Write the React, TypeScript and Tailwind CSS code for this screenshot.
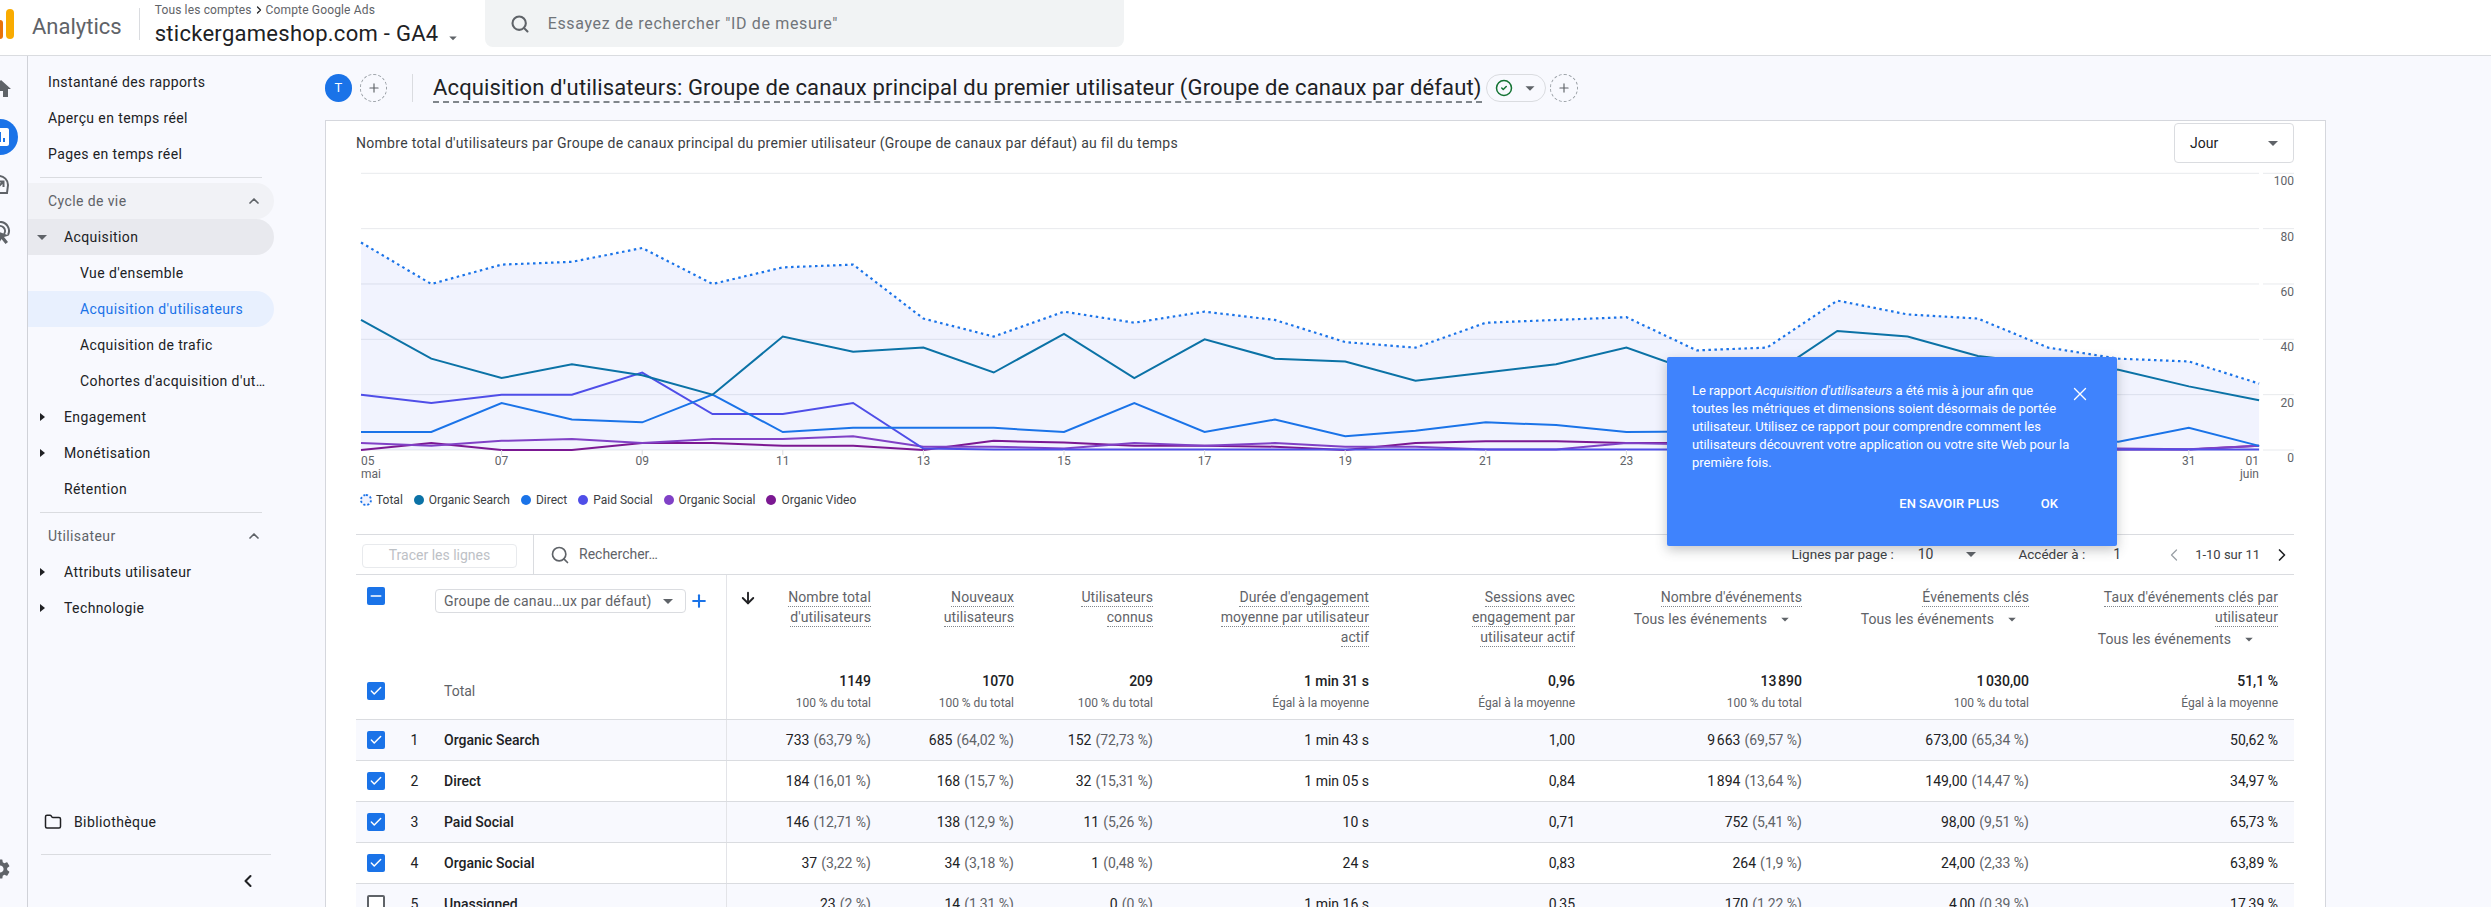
import { Check, ChevronLeft, ChevronRight, ChevronUp, CircleCheck, Folder, Minus, Plus, Search, X, ArrowDown } from "lucide-react";
import { MdAssessment, MdHome, MdSettings } from "react-icons/md";

const Caret = ({ down = true }: { down?: boolean }) => (
  <span
    className={
      down
        ? "inline-block w-0 h-0 border-x-[5px] border-t-[5px] border-x-transparent border-t-[#5f6368]"
        : "inline-block w-0 h-0 border-y-[4px] border-l-[5px] border-y-transparent border-l-[#202124]"
    }
  />
);

const Checkbox = ({ state }: { state: "on" | "off" | "some" }) => {
  if (state === "off") {
    return <span className="block w-[18px] h-[18px] shrink-0 rounded-[2px] border-2 border-[#5f6368] bg-white" />;
  }
  return (
    <span className="flex items-center justify-center w-[18px] h-[18px] shrink-0 rounded-[2px] bg-[#1a73e8] text-white">
      {state === "on" ? <Check size={14} strokeWidth={2.5} /> : <Minus size={16} strokeWidth={2.5} />}
    </span>
  );
};

const NavRow = ({ label, indent, caret, className = "" }: { label: string; indent: "top" | "group" | "child"; caret?: "open" | "closed"; className?: string }) => (
  <div className={`flex items-center h-[36px] w-[246px] rounded-r-[18px] whitespace-nowrap ${className}`}>
    {indent === "top" && <span className="pl-[20px]">{label}</span>}
    {indent === "group" && (
      <>
        <span className="flex justify-center w-[36px] pr-[8px]">{caret === "open" ? <Caret /> : caret === "closed" ? <Caret down={false} /> : null}</span>
        <span>{label}</span>
      </>
    )}
    {indent === "child" && <span className="pl-[52px]">{label}</span>}
  </div>
);

const days = (values: number[]) => values.map((v, i) => `${361 + 70.3 * i},${451 - 2.767 * v}`).join(" ");

const total = [75, 60, 67, 68, 73, 60, 66, 67, 47.5, 41, 50, 46, 50, 47, 39, 37, 46, 47, 48, 36, 37, 54, 49, 47.5, 37, 33, 32, 24];
const series = [
  { name: "Organic Search", color: "#0b72a6", values: [47, 33, 26, 31, 27, 20, 41, 35.5, 37, 28, 42, 26, 40, 33, 32, 25, 28, 31, 37, 28, 26, 43, 41, 34, 31, 29, 23, 18] },
  { name: "Direct", color: "#1a73e8", values: [6.5, 6.5, 17, 11, 10, 20, 6.5, 8, 8, 8, 6.5, 17, 6.5, 11, 5, 7, 10, 9, 6.5, 6.7, 7, 6, 5, 4, 4, 3, 8, 1.5] },
  { name: "Paid Social", color: "#4f4ee8", values: [20, 17, 20, 20, 28, 13, 13, 17, 0.5, 0.2, 0.2, 0.2, 0.2, 0.2, 0.2, 0.2, 0.2, 0.2, 0.2, 0.2, 0.2, 0.2, 0.2, 0.2, 0.2, 0.2, 0.2, 0.2] },
  { name: "Organic Social", color: "#8041c6", values: [2.5, 1.5, 3.3, 4, 2.5, 4, 4, 5, 1.2, 1.2, 0.5, 2.5, 1.5, 2.5, 1.2, 1.2, 0.2, 0.2, 2.5, 2, 1, 1, 1, 1, 1, 0.5, 0.3, 1.5] },
  { name: "Organic Video", color: "#7b1892", values: [0, 2.5, 0, 0, 2.5, 2.5, 1.5, 1.5, 0, 3.3, 2.7, 1.5, 1.5, 1.2, 0, 2.5, 3.2, 3.2, 2.5, 2.5, 2, 2, 1.5, 1, 1, 0.2, 0.2, 1.5] },
];

const yTicks = [100, 80, 60, 40, 20, 0];
// 25, 27 and 29 sit behind the popup
const xTicks = [2, 4, 6, 8, 10, 12, 14, 16, 18, 26];

const Chart = () => (
  <svg viewBox="356 164 1938 320" className="block w-[1938px] h-[320px]">
    {yTicks.map((v) => {
      const y = 451 - 2.767 * v;
      return (
        <g key={v}>
          <line x1={361} x2={2259} y1={y} y2={y} stroke="#e8eaed" strokeWidth={1} />
          <line x1={2263} x2={2294} y1={y} y2={y} stroke="#e8eaed" strokeWidth={1} />
          <text x={2294} y={y + 12} textAnchor="end" fontSize={12} fill="#5f6368">{v}</text>
        </g>
      );
    })}
    <polygon points={`361,451 ${days(total)} 2259.1,451`} fill="#3f51f0" fillOpacity={0.07} />
    {series.slice().reverse().map((s) => (
      <polyline key={s.name} points={days(s.values)} fill="none" stroke={s.color} strokeWidth={2} />
    ))}
    <polyline points={days(total)} fill="none" stroke="#1a73e8" strokeWidth={2.2} strokeDasharray="2.5 3.5" />
    <text x={361} y={466} fontSize={12} fill="#5f6368">05</text>
    <text x={361} y={479} fontSize={12} fill="#5f6368">mai</text>
    {xTicks.map((i) => {
      const x = 361 + 70.3 * i;
      return (
        <g key={i}>
          <line x1={x} x2={x} y1={451} y2={456} stroke="#dadce0" />
          <text x={x} y={466} textAnchor="middle" fontSize={12} fill="#5f6368">{String(5 + i).padStart(2, "0")}</text>
        </g>
      );
    })}
    <text x={2259} y={466} textAnchor="end" fontSize={12} fill="#5f6368">01</text>
    <text x={2259} y={479} textAnchor="end" fontSize={12} fill="#5f6368">juin</text>
  </svg>
);

const columns = [
  { lines: ["Nombre total", "d'utilisateurs"], total: "1149", sub: "100 % du total" },
  { lines: ["Nouveaux", "utilisateurs"], total: "1070", sub: "100 % du total" },
  { lines: ["Utilisateurs", "connus"], total: "209", sub: "100 % du total" },
  { lines: ["Durée d'engagement", "moyenne par utilisateur", "actif"], total: "1 min 31 s", sub: "Égal à la moyenne" },
  { lines: ["Sessions avec", "engagement par", "utilisateur actif"], total: "0,96", sub: "Égal à la moyenne" },
  { lines: ["Nombre d'événements"], total: "13\u202f890", sub: "100 % du total", events: true },
  { lines: ["Événements clés"], total: "1\u202f030,00", sub: "100 % du total", events: true },
  { lines: ["Taux d'événements clés par", "utilisateur"], total: "51,1 %", sub: "Égal à la moyenne", events: true },
];

const rows = [
  { name: "Organic Search", on: true, cells: [["733", "(63,79 %)"], ["685", "(64,02 %)"], ["152", "(72,73 %)"], ["1 min 43 s"], ["1,00"], ["9\u202f663", "(69,57 %)"], ["673,00", "(65,34 %)"], ["50,62 %"]] },
  { name: "Direct", on: true, cells: [["184", "(16,01 %)"], ["168", "(15,7 %)"], ["32", "(15,31 %)"], ["1 min 05 s"], ["0,84"], ["1\u202f894", "(13,64 %)"], ["149,00", "(14,47 %)"], ["34,97 %"]] },
  { name: "Paid Social", on: true, cells: [["146", "(12,71 %)"], ["138", "(12,9 %)"], ["11", "(5,26 %)"], ["10 s"], ["0,71"], ["752", "(5,41 %)"], ["98,00", "(9,51 %)"], ["65,73 %"]] },
  { name: "Organic Social", on: true, cells: [["37", "(3,22 %)"], ["34", "(3,18 %)"], ["1", "(0,48 %)"], ["24 s"], ["0,83"], ["264", "(1,9 %)"], ["24,00", "(2,33 %)"], ["63,89 %"]] },
  { name: "Unassigned", on: false, cells: [["23", "(2 %)"], ["14", "(1,31 %)"], ["0", "(0 %)"], ["1 min 16 s"], ["0,35"], ["170", "(1,22 %)"], ["4,00", "(0,39 %)"], ["17,39 %"]] },
];

const gridCols = "grid grid-cols-[371px_160px_143px_139px_216px_206px_227px_227px_249px]";

export default function App() {
  return (
    <div className="flex flex-col w-[2491px] h-[907px] overflow-hidden bg-[#f8f9fe] text-[#202124] [font-family:Roboto,sans-serif]">
      <header className="flex items-start h-[56px] shrink-0 bg-white border-b border-[#dadce0]">
        <svg width="15" height="55" viewBox="0 0 15 55" className="shrink-0">
          <rect x="-5" y="20" width="8" height="19" rx="3" fill="#e8710a" />
          <rect x="6" y="9" width="8" height="30" rx="4" fill="#f9ab00" />
        </svg>
        <span className="ml-[17px] mt-[13px] text-[22px] leading-[28px] text-[#5f6368]">Analytics</span>
        <span className="ml-[17px] mt-[8px] w-px h-[32px] bg-[#dadce0]" />
        <div className="ml-[15px] w-[330px] pt-[2px]">
          <div className="flex items-center text-[12px] leading-[16px] tracking-[0.15px] text-[#5f6368]">
            Tous les comptes
            <ChevronRight size={12} strokeWidth={2.5} className="mx-[1px] text-[#202124]" />
            Compte Google Ads
          </div>
          <div className="flex items-center gap-[10px] text-[22px] leading-[28px] mt-[1px] tracking-[0.28px]">
            stickergameshop.com - GA4
            <span className="mt-[2px] scale-75"><Caret /></span>
          </div>
        </div>
        <div className="flex items-center w-[639px] h-[47px] rounded-b-[8px] bg-[#f1f3f4]">
          <Search size={20} strokeWidth={2.5} className="ml-[25px] text-[#5f6368]" />
          <span className="ml-[18px] text-[16px] tracking-[0.65px] text-[#70757a]">Essayez de rechercher "ID de mesure"</span>
        </div>
      </header>

      <div className="flex flex-1 min-h-0">
        <div className="flex flex-col w-[28px] shrink-0 overflow-hidden border-r border-[#d0d2d8] pt-[9px]">
          <div className="flex items-center h-[48px]"><MdHome size={24} className="-ml-[11px] shrink-0 text-[#5f6368]" /></div>
          <div className="flex items-center h-[48px]">
            <span className="flex items-center justify-center -ml-[18px] w-[36px] h-[36px] shrink-0 rounded-full bg-[#1a73e8] text-white"><MdAssessment size={24} /></span>
          </div>
          <div className="flex items-center h-[48px]">
            <svg width="24" height="24" viewBox="0 0 24 24" fill="none" stroke="#5f6368" strokeWidth="2" className="-ml-[13px] shrink-0">
              <path d="M4 20h16l1-8a9 9 0 1 0-18 0z" />
              <path d="M9 16l7-7M11 8.5h5.5V14" />
            </svg>
          </div>
          <div className="flex items-center h-[48px]">
            <svg width="24" height="24" viewBox="0 0 24 24" fill="none" stroke="#5f6368" strokeWidth="2" className="-ml-[12px] shrink-0">
              <path d="M4 14a9 9 0 1 1 16 0" />
              <path d="M8 13a5 5 0 1 1 8 0" />
              <path d="M9 10l12 4.5-5 1.5 4 5-2.5 2-4-5-2.5 4z" fill="#5f6368" stroke="none" />
            </svg>
          </div>
          <div className="flex items-center mt-auto mb-[26px] h-[24px]"><MdSettings size={24} className="-ml-[12px] shrink-0 text-[#5f6368]" /></div>
        </div>

        <aside className="flex flex-col w-[297px] shrink-0 pt-[8px] text-[14px] tracking-[0.4px] text-[#202124]">
          <NavRow label="Instantané des rapports" indent="top" />
          <NavRow label="Aperçu en temps réel" indent="top" />
          <NavRow label="Pages en temps réel" indent="top" />
          <div className="ml-[12px] w-[222px] mt-[5px] mb-[5px] h-px bg-[#dadce0]" />
          <div className="flex items-center justify-between h-[36px] w-[246px] pl-[20px] pr-[12px] rounded-r-[18px] bg-[#f1f2f6] text-[#5f6368]">
            Cycle de vie
            <ChevronUp size={16} strokeWidth={2.5} />
          </div>
          <NavRow label="Acquisition" indent="group" caret="open" className="bg-[#e8e9ee]" />
          <NavRow label="Vue d'ensemble" indent="child" />
          <NavRow label="Acquisition d'utilisateurs" indent="child" className="bg-[#e8f0fe] text-[#1a73e8]" />
          <NavRow label="Acquisition de trafic" indent="child" />
          <NavRow label="Cohortes d'acquisition d'ut…" indent="child" />
          <NavRow label="Engagement" indent="group" caret="closed" />
          <NavRow label="Monétisation" indent="group" caret="closed" />
          <NavRow label="Rétention" indent="group" />
          <div className="ml-[12px] w-[222px] mt-[5px] mb-[5px] h-px bg-[#dadce0]" />
          <div className="flex items-center justify-between h-[36px] w-[246px] pl-[20px] pr-[12px] text-[#5f6368]">
            Utilisateur
            <ChevronUp size={16} strokeWidth={2.5} />
          </div>
          <NavRow label="Attributs utilisateur" indent="group" caret="closed" />
          <NavRow label="Technologie" indent="group" caret="closed" />
          <div className="flex items-center h-[36px] mt-auto mb-[14px] pl-[16px]">
            <Folder size={18} strokeWidth={2} className="text-[#202124]" />
            <span className="ml-[12px]">Bibliothèque</span>
          </div>
          <div className="ml-[13px] w-[230px] h-px bg-[#dadce0]" />
          <div className="flex items-center h-[52px] pl-[210px]"><ChevronLeft size={20} strokeWidth={2.5} className="text-[#202124]" /></div>
        </aside>

        <main className="flex flex-col w-[2000px] shrink-0">
          <div className="flex items-center h-[64px] shrink-0">
            <span className="flex items-center justify-center w-[27px] h-[28px] rounded-full bg-[#1a73e8] text-[13px] text-white">T</span>
            <span className="flex items-center justify-center ml-[8px] w-[27px] h-[28px] rounded-full border border-dashed border-[#9aa0a6] text-[#5f6368]"><Plus size={14} /></span>
            <span className="ml-[25px] w-px h-[28px] bg-[#dadce0]" />
            <span className="ml-[20px] text-[22px] leading-[27px] tracking-[0.15px] whitespace-nowrap border-b-2 border-dashed border-[#80868b]">
              Acquisition d'utilisateurs: Groupe de canaux principal du premier utilisateur (Groupe de canaux par défaut)
            </span>
            <span className="flex items-center ml-[4px] w-[60px] h-[28px] pl-[8px] rounded-[14px] border border-[#dadce0]">
              <CircleCheck size={18} strokeWidth={2} className="text-[#137333]" />
              <span className="ml-[12px] scale-90 flex"><Caret /></span>
            </span>
            <span className="flex items-center justify-center ml-[4px] w-[28px] h-[28px] rounded-full border border-dashed border-[#9aa0a6] text-[#5f6368]"><Plus size={14} /></span>
          </div>

          <div className="relative flex-1 min-h-0 overflow-hidden bg-white border-t border-l border-r border-[#d5d7dd] pl-[30px] w-[2001px]">
            <div className="flex items-start justify-between w-[1938px] pt-[2px]">
              <span className="mt-[11px] text-[14px] leading-[18px] tracking-[0.29px] text-[#3c4043]">
                Nombre total d'utilisateurs par Groupe de canaux principal du premier utilisateur (Groupe de canaux par défaut) au fil du temps
              </span>
              <span className="flex items-center justify-between w-[120px] h-[40px] px-[15px] rounded-[4px] border border-[#dadce0] text-[14px]">
                Jour
                <Caret />
              </span>
            </div>
            <Chart />
            <div className="flex items-center h-[24px] w-[1938px] mt-[5px] text-[12px] text-[#3c4043]">
              <span className="ml-[4px] w-[12px] h-[12px] rounded-full border-2 border-dotted border-[#1a73e8] bg-[#f1f3fe]" />
              <span className="ml-[4px] mr-[11px]">Total</span>
              {series.map((s) => (
                <span key={s.name} className="flex items-center mr-[11px]">
                  <span className="w-[10px] h-[10px] rounded-full" style={{ backgroundColor: s.color }} />
                  <span className="ml-[5px]">{s.name}</span>
                </span>
              ))}
            </div>

            <div className="flex items-center w-[1938px] h-[41px] mt-[22px] border-t border-b border-[#dadce0] text-[14px]">
              <span className="flex items-center justify-center ml-[6px] mt-[2px] w-[155px] h-[24px] rounded-[4px] border border-[#e8eaed] text-[#bdc1c6]">Tracer les lignes</span>
              <span className="ml-[16px] w-px h-full bg-[#dadce0]" />
              <Search size={20} strokeWidth={2} className="ml-[16px] text-[#5f6368]" />
              <span className="ml-[9px] text-[14px] text-[#5f6368]">Rechercher…</span>
              <span className="ml-auto text-[13.5px] text-[#3c4043]">Lignes par page :</span>
              <span className="ml-[24px] text-[14px] text-[#3c4043]">10</span>
              <span className="ml-[32px] flex"><Caret /></span>
              <span className="ml-[43px] text-[13.5px] text-[#3c4043]">Accéder à :</span>
              <span className="ml-[28px] text-[14px] text-[#3c4043]">1</span>
              <ChevronLeft size={20} strokeWidth={1.5} className="ml-[43px] text-[#9aa0a6]" />
              <span className="ml-[11px] text-[13px] text-[#3c4043]">1-10 sur 11</span>
              <ChevronRight size={20} strokeWidth={2} className="ml-[12px] mr-[2px] text-[#202124]" />
            </div>

            <div className={`${gridCols} w-[1938px] h-[145px] border-b border-[#dadce0]`}>
              <div className="flex flex-col border-r border-[#e3e4e8] pl-[11px] pt-[12px]">
                <div className="flex items-start">
                  <Checkbox state="some" />
                  <span className="flex items-center justify-between ml-[50px] mt-[2px] w-[251px] h-[24px] pl-[8px] pr-[12px] rounded-[4px] border border-[#dadce0] text-[14px] text-[#5f6368] tracking-[0.2px]">
                    Groupe de canau…ux par défaut)
                    <Caret />
                  </span>
                  <Plus size={20} strokeWidth={2.5} className="ml-[3px] mt-[4px] text-[#1a73e8]" />
                </div>
                <div className="flex items-center mt-auto mb-[17px]">
                  <Checkbox state="on" />
                  <span className="ml-[59px] mt-[1px] text-[14px] text-[#5f6368]">Total</span>
                </div>
              </div>
              {columns.map((c, i) => (
                <div key={c.lines[0]} className="flex flex-col pt-[12px] pr-[16px] pb-[8px]">
                  <div className="flex justify-between">
                    {i === 0 ? <ArrowDown size={18} strokeWidth={2.5} className="ml-[12px] mt-[2px] shrink-0" /> : <span />}
                    <div className="flex flex-col items-end text-[14px] tracking-[0.1px] text-[#5f6368]">
                      {c.lines.map((l) => (
                        <span key={l} className="h-[20px] leading-[20px] whitespace-nowrap border-b-[1.5px] border-dotted border-[#80868b]">{l}</span>
                      ))}
                      {c.events && (
                        <span className={`flex items-center gap-[13px] h-[20px] mt-[2px] whitespace-nowrap ${i === 7 ? "mr-[24px]" : "mr-[12px]"}`}>
                          Tous les événements
                          <span className="flex scale-75"><Caret /></span>
                        </span>
                      )}
                    </div>
                  </div>
                  <div className="mt-auto text-right">
                    <div className="text-[14px] leading-[20px] font-medium whitespace-nowrap">{c.total}</div>
                    <div className="mt-[4px] text-[12px] leading-[16px] text-[#5f6368] whitespace-nowrap">{c.sub}</div>
                  </div>
                </div>
              ))}
            </div>

            {rows.map((r, n) => (
              <div key={r.name} className={`${gridCols} w-[1938px] h-[41px] border-b border-[#dadce0] text-[14px] ${n % 2 === 0 ? "bg-[#f8f9fe]" : "bg-white"}`}>
                <div className="flex items-center pl-[11px] border-r border-[#e3e4e8]">
                  <Checkbox state={r.on ? "on" : "off"} />
                  <span className="w-[59px] text-center">{n + 1}</span>
                  <span className="font-medium">{r.name}</span>
                </div>
                {r.cells.map((cell, i) => (
                  <div key={i} className="flex items-center justify-end pr-[16px] whitespace-nowrap">
                    {cell[0]}
                    {cell[1] && <span className="ml-[4px] text-[#5f6368]">{cell[1]}</span>}
                  </div>
                ))}
              </div>
            ))}

            <div className="absolute left-[1341px] top-[236px] w-[450px] h-[189px] rounded-[2px] bg-[#3f83fd] text-white shadow-[0_4px_12px_rgba(60,64,67,0.3)]">
              <p className="pl-[25px] pt-[25px] text-[13px] leading-[18px]">
                Le rapport <em>Acquisition d'utilisateurs</em> a été mis à jour afin que<br />
                toutes les métriques et dimensions soient désormais de portée<br />
                utilisateur. Utilisez ce rapport pour comprendre comment les<br />
                utilisateurs découvrent votre application ou votre site Web pour la<br />
                première fois.
              </p>
              <X size={22} strokeWidth={1.5} className="absolute left-[402px] top-[26px]" />
              <div className="flex items-center justify-end gap-[42px] mt-[22px] pr-[59px] text-[13px] font-medium">
                <span>EN SAVOIR PLUS</span>
                <span>OK</span>
              </div>
            </div>
          </div>
        </main>
      </div>
    </div>
  );
}
